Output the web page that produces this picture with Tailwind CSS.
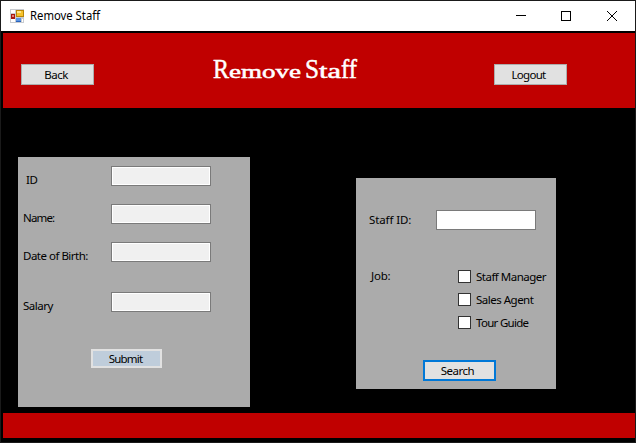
<!DOCTYPE html>
<html lang="en"><head><meta charset="utf-8"><title>Remove Staff</title>
<script src="https://cdn.jsdelivr.net/npm/@tailwindcss/browser@4"></script></head>
<body class="overflow-hidden bg-black">
<div class="flex h-[443px] w-[636px] flex-col border border-[#1a1a1a] bg-black font-['Noto_Sans',sans-serif] text-[11.5px] leading-[14px] tracking-[-0.5px] text-black">
  <header class="flex h-[30px] shrink-0 items-center bg-white pl-[9px]">
    <svg class="-mt-px size-[14px] shrink-0" viewBox="0 0 14 14" shape-rendering="crispEdges">
      <path d="M0 0h14v14H0z" fill="#c8cbd0"/><path d="M1 1h4v3H1zM1 10h4v3H1zM12 10h1v3h-1z" fill="#fff"/>
      <path d="M6 1h8v7H6z" fill="#b98508"/><path d="M7 2h6v5H7z" fill="#f6c32d"/><path d="M7 2h4v2H7z" fill="#ffe58b"/>
      <path d="M1 5h4v5H1z" fill="#a71811"/><path d="M2 6h2v2H2z" fill="#e78178"/>
      <path d="M6 9h5v4H6z" fill="#2863bd"/><path d="M6 9h5v3H6z" fill="#5b94e3"/>
    </svg>
    <svg class="ml-[6px] h-[20px] w-[80px] shrink-0" viewBox="0 0 80 20"><text x="0" y="14" textLength="70" lengthAdjust="spacingAndGlyphs" font-family="Noto Sans" font-size="11.8" letter-spacing="0">Remove Staff</text></svg>
    <svg class="ml-auto mr-[17px] h-[12px] w-[102px] shrink-0" viewBox="0 0 102 12" fill="none" stroke="#000">
      <path d="M0 5.5h10M45.5 1.5h9v9h-9z" shape-rendering="crispEdges"/><path d="M91 1l10 10M101 1L91 11"/>
    </svg>
  </header>
  <section class="mt-[2px] ml-[2px] flex h-[75px] shrink-0 items-start bg-[#c00000] pl-[18px]">
    <button class="mt-[31px] h-[21px] w-[73px] border border-[#adadad] bg-[#e1e1e1] pt-px pr-[3px] tracking-[-0.5px]">Back</button>
    <svg class="mt-[20px] ml-[118px] h-[34px] w-[147px]" viewBox="0 0 147 34" font-family="Liberation Serif" fill="#fff" stroke="#fff" stroke-width=".5" letter-spacing="0">
      <text y="25" font-size="28"><tspan x="1" textLength="16" lengthAdjust="spacingAndGlyphs">R</tspan><tspan x="17" font-size="19" textLength="72" lengthAdjust="spacingAndGlyphs">emove</tspan> <tspan x="93" textLength="14" lengthAdjust="spacingAndGlyphs">S</tspan><tspan x="107" font-size="20" textLength="22" lengthAdjust="spacingAndGlyphs">ta</tspan><tspan x="129" textLength="16" lengthAdjust="spacingAndGlyphs">ff</tspan></text>
    </svg>
    <button class="mt-[31px] ml-[135px] h-[21px] w-[73px] border border-[#adadad] bg-[#e1e1e1] pt-px pr-[4px] tracking-[-0.7px]">Logout</button>
  </section>
  <main class="flex h-[305px] shrink-0 items-start pl-[17px]">
    <form class="mt-[49px] h-[250px] w-[232px] bg-[#ababab] pt-[9px]">
      <div class="flex h-[38px] items-start pl-[5px]"><label class="mt-[7px] w-[88px] pl-[3px]">ID</label><input readonly class="h-[20px] w-[100px] border border-[#7a7a7a] bg-[#f0f0f0] shadow-[inset_0_0_0_1px_#fff] outline-none"></div>
      <div class="flex h-[38px] items-start pl-[5px]"><label class="mt-[7px] w-[88px] tracking-[-0.85px]">Name:</label><input readonly class="h-[20px] w-[100px] border border-[#7a7a7a] bg-[#f0f0f0] shadow-[inset_0_0_0_1px_#fff] outline-none"></div>
      <div class="flex h-[50px] items-start pl-[5px]"><label class="mt-[7px] w-[88px]">Date of Birth:</label><input readonly class="h-[20px] w-[100px] border border-[#7a7a7a] bg-[#f0f0f0] shadow-[inset_0_0_0_1px_#fff] outline-none"></div>
      <div class="flex h-[57px] items-start pl-[5px]"><label class="mt-[7px] w-[88px]">Salary</label><input readonly class="h-[20px] w-[100px] border border-[#7a7a7a] bg-[#f0f0f0] shadow-[inset_0_0_0_1px_#fff] outline-none"></div>
      <button type="button" class="ml-[73px] block h-[19px] w-[71px] border-2 border-[#e1e1e1] bg-[#bfcddb] pt-px pr-[2px] leading-[14px] tracking-[-0.8px]">Submit</button>
    </form>
    <form class="mt-[70px] ml-[106px] h-[211px] w-[200px] bg-[#ababab] pt-[32px]">
      <div class="flex h-[60px] items-start pl-[13px]"><label class="mt-[3px] w-[67px] tracking-[-0.1px]">Staff ID:</label><input class="h-[20px] w-[100px] border border-[#7a7a7a] bg-white outline-none"></div>
      <div class="flex h-[90px] items-start pl-[15px]"><span class="-mt-px w-[87px] tracking-[-0.2px]">Job:</span>
        <div class="flex flex-col gap-[10px] whitespace-nowrap">
          <label class="flex h-[13px] items-center gap-[5px]"><span class="size-[13px] border border-[#333] bg-white"></span><span>Staff Manager</span></label>
          <label class="flex h-[13px] items-center gap-[5px]"><span class="size-[13px] border border-[#333] bg-white"></span><span>Sales Agent</span></label>
          <label class="flex h-[13px] items-center gap-[5px]"><span class="size-[13px] border border-[#333] bg-white"></span><span class="tracking-[-0.7px]">Tour Guide</span></label>
        </div></div>
      <button type="button" class="ml-[67px] block h-[21px] w-[73px] border-2 border-[#0078d7] bg-[#e1e1e1] pt-px pr-[4px] tracking-[-0.5px]">Search</button>
    </form>
  </main>
  <footer class="ml-[2px] h-[25px] shrink-0 bg-[#c00000]"></footer>
</div>
</body></html>
